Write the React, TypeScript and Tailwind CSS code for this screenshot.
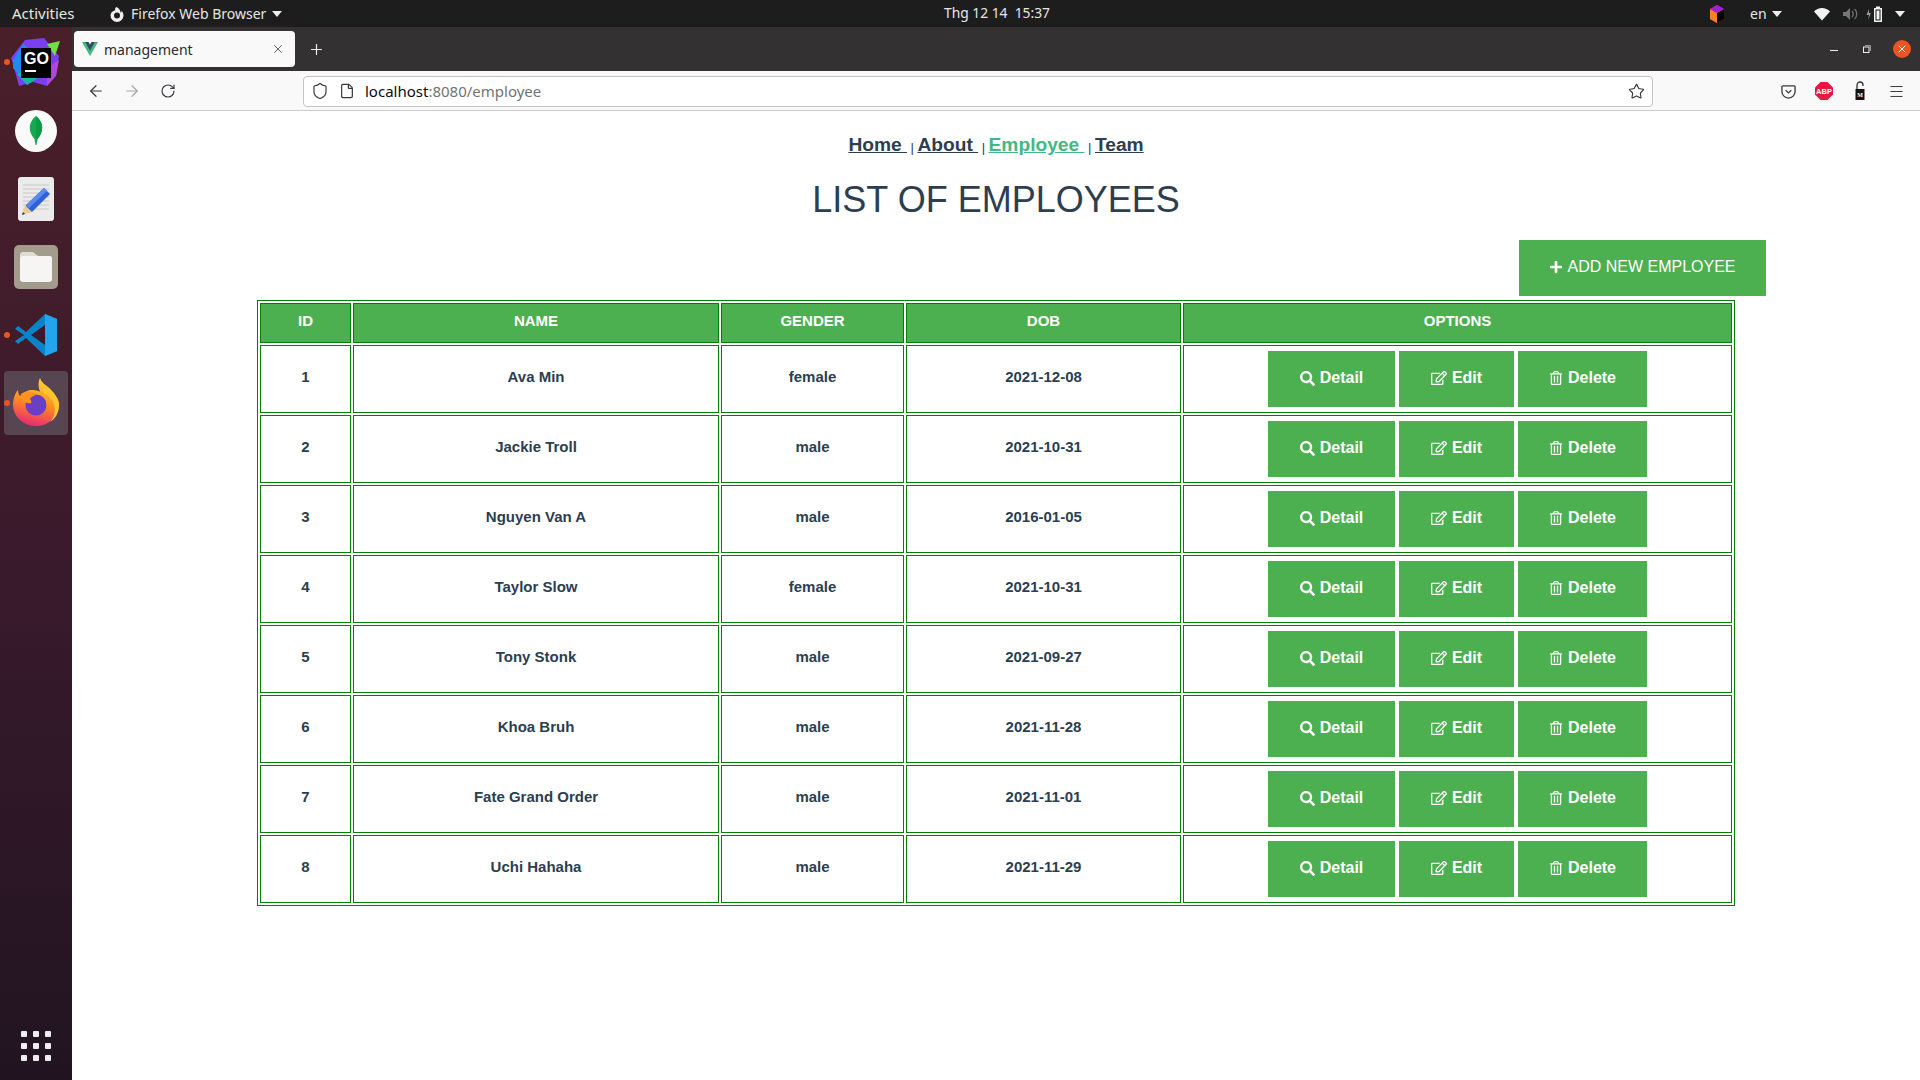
import React from "react";
import { FaSearch, FaRegEdit, FaRegTrashAlt, FaPlus } from "react-icons/fa";
import { ArrowLeft, ArrowRight, RotateCw, Star, Menu, X, Plus, File, Shield } from "lucide-react";

const rows = [
  ["1", "Ava Min", "female", "2021-12-08"],
  ["2", "Jackie Troll", "male", "2021-10-31"],
  ["3", "Nguyen Van A", "male", "2016-01-05"],
  ["4", "Taylor Slow", "female", "2021-10-31"],
  ["5", "Tony Stonk", "male", "2021-09-27"],
  ["6", "Khoa Bruh", "male", "2021-11-28"],
  ["7", "Fate Grand Order", "male", "2021-11-01"],
  ["8", "Uchi Hahaha", "male", "2021-11-29"],
];

function Caret({ className = "" }: { className?: string }) {
  return <span className={`block w-0 h-0 border-l-[5px] border-r-[5px] border-t-[6px] border-l-transparent border-r-transparent border-t-[#eeeeee] ${className}`} />;
}

function TopBar() {
  return (
    <div className="h-[27px] bg-[#1d1d1d] text-[#e6e6e6] text-[14px] flex items-center font-['Noto_Sans',sans-serif]">
      <div className="w-[944px] flex items-center pl-3">
        <span className="w-[97px] text-[15px]">Activities</span>
        <svg width="16" height="16" viewBox="0 0 16 16" className="mr-[6px]">
          <path fillRule="evenodd" d="M7.500 1C5.600 2 6 3.500 6.300 4.300 3.700 4.800 1.500 6.700 1.500 9.500a6.500 6.500 0 0 0 13 0c0-2-.9-3.700-2-4.800.2 1-.2 1.700-.8 2-.3-2.300-1.900-4.700-4.200-5.700zM8 6.500a3 3 0 1 1 0 6 3 3 0 0 1 0-6z" fill="#eeeeee" />
        </svg>
        <span className="mr-[6px]">Firefox Web Browser</span>
        <Caret />
      </div>
      <span className="w-[106px] text-center text-[13.8px] whitespace-pre">Thg 12 14  15:37</span>
      <div className="flex-1 flex items-center">
        <svg width="16" height="20" viewBox="0 0 16 20" className="ml-[659px]">
          <path d="M8 1l7 4v10l-7 4-7-4V5z" fill="#ec1e8a" />
          <path d="M1 5l7 4v10l-7-4z" fill="#f58220" />
          <path d="M8 9l7-4v10l-7 4z" fill="#000000" />
          <path d="M1 5l7-4 7 4-7 4z" fill="#a01fd0" />
        </svg>
        <span className="ml-[25px]">en</span>
        <Caret className="ml-[5px]" />
        <svg width="16" height="14" viewBox="0 0 16 14" className="ml-[32px]">
          <path d="M0 4.500C2 2.500 5 1 8 1s6 1.500 8 3.500L8 13.500z" fill="#f2f2f2" />
        </svg>
        <svg width="16" height="14" viewBox="0 0 16 14" className="ml-[12px]">
          <path d="M1 5h3l4-4v12l-4-4H1z" fill="#777777" />
          <path d="M10 4c1.500 1.500 1.500 4.500 0 6M12.500 2c3 2.500 3 7.500 0 10" stroke="#777777" strokeWidth="1.200" fill="none" />
        </svg>
        <svg width="22" height="18" viewBox="0 0 22 18" className="ml-[7px]">
          <path d="M4 4L1.500 10H4L3 15l3-7H4z" fill="#999999" />
          <path d="M11 1.500h4V3h2v14H9V3h2z" fill="#f2f2f2" />
          <rect x="10.500" y="4.500" width="5" height="11" fill="#1d1d1d" />
          <rect x="11.500" y="5.500" width="3" height="9" fill="#f2f2f2" />
        </svg>
        <Caret className="ml-[8px]" />
      </div>
    </div>
  );
}

function GoLand() {
  return (
    <svg width="50" height="50" viewBox="0 0 50 50">
      <path d="M14 2L33 0l15 18-3 19-9 11-14-4-14 4L2 26 0 20z" fill="#7b3ff2" />
      <path d="M2 22L12 6l14 12-9 29L2 30z" fill="#1f8bf0" />
      <path d="M6 36l10 11 14-9-8-10z" fill="#13b8a5" />
      <path d="M36 6l13-3-5 15z" fill="#6ee044" />
      <path d="M36 30l12-8-3 16-9 10z" fill="#b245e0" />
      <rect x="10" y="10" width="30" height="30" fill="#000000" />
      <rect x="14" y="32" width="11" height="2" fill="#ffffff" />
    </svg>
  );
}

function Dock() {
  return (
    <div className="relative w-[72px] shrink-0 flex flex-col items-center pt-[2px] bg-gradient-to-b from-[#4a1f29] via-[#3a1a2c] to-[#211420]">
      <div className="h-[68px] flex items-center justify-center relative w-full">
        <div className="relative">
          <GoLand />
          <span className="absolute left-[13px] top-[13px] text-white text-[16px] leading-none font-bold font-['Liberation_Sans',sans-serif]">GO</span>
        </div>
      </div>
      <div className="h-[68px] flex items-center justify-center">
        <svg width="42" height="42" viewBox="0 0 42 42">
          <circle cx="21" cy="21" r="21" fill="#fafafa" />
          <path d="M21 6c8 6 8 16 1.500 23l-1 6h-1l-1-6C13 22 13 12 21 6z" fill="#13aa52" />
          <path d="M21 6c8 6 8 16 1.500 23l-1.500 2z" fill="#0f9a49" />
        </svg>
      </div>
      <div className="h-[68px] flex items-center justify-center">
        <svg width="36" height="44" viewBox="0 0 36 44">
          <rect width="36" height="44" rx="3" fill="#ebebeb" />
          <path d="M5 8h26M5 12h26M5 16h26M5 20h26M5 24h26M5 28h26M5 32h26" stroke="#c8c8c8" strokeWidth="1" />
          <path d="M26 11l6 6-18 18-7-1 1-6z" fill="#2f62d6" />
          <path d="M26 11l3 3-18 17-3-3z" fill="#5a8af0" />
          <path d="M7 28l7 7-10 3z" fill="#e8c9a0" />
          <path d="M5 35l2 2-3 1z" fill="#333333" />
        </svg>
      </div>
      <div className="h-[68px] flex items-center justify-center">
        <svg width="44" height="44" viewBox="0 0 44 44">
          <rect width="44" height="44" rx="5" fill="#a39c8c" />
          <path d="M6 15v-5a3 3 0 0 1 3-3h10l5 4h12a2 2 0 0 1 2 2v2z" fill="#dfdcd3" />
          <rect x="6" y="11" width="32" height="26" rx="3" fill="#f6f5f3" />
        </svg>
      </div>
      <div className="h-[68px] flex items-center justify-center">
        <svg width="42" height="42" viewBox="0 0 42 42">
          <path d="M30 0L42 5v32l-12 5L11 24l-8 6-3-3 9-6-9-6 3-3 8 6z" fill="#0a84c8" />
          <path d="M30 0l12 5v32l-12 5z" fill="#23a5ee" />
          <path d="M30 11v20L16 21z" fill="#3a1a2c" />
        </svg>
      </div>
      <div className="h-[68px] flex items-center justify-center">
        <div className="w-[64px] h-[64px] rounded-[4px] bg-[#574552] flex items-center justify-center pb-[3px]">
          <svg width="46" height="48" viewBox="0 0 46 48">
            <defs>
              <linearGradient id="ff" x1="0.700" y1="0" x2="0.450" y2="1">
                <stop offset="0" stopColor="#ffd93a" />
                <stop offset="0.550" stopColor="#ff8a1f" />
                <stop offset="1" stopColor="#ea2a72" />
              </linearGradient>
            </defs>
            <path d="M27 0c1 5 6 7 10 11 6 6 9 11 9 16a23 21 0 1 1-46 0c0-6 2-12 5-15 0 3 1 5 2 6 2-3 6-5 10-6 2 0 8 0 10 2-2-5-2-10 0-14z" fill="url(#ff)" />
            <path d="M27 0c1 5 6 7 10 11 6 6 9 11 9 16 0 8-4 14-9 17 4-4 6-10 4-17-1-5-5-9-9-11-3-5-6-9-5-16z" fill="#ffc52e" />
            <circle cx="23" cy="27" r="10.500" fill="#6a3fc4" />
            <path d="M8 16c5-3 11-3 15 1-3 1-5 2-6 4 1 2 2 3 1 4-5 1-9-2-10-9z" fill="#ff9322" />
          </svg>
        </div>
      </div>
      <span className="absolute left-[4px] top-[32px] w-[6px] h-[6px] rounded-full bg-[#e95420]" />
      <span className="absolute left-[4px] top-[305px] w-[6px] h-[6px] rounded-full bg-[#e95420]" />
      <span className="absolute left-[4px] top-[373px] w-[6px] h-[6px] rounded-full bg-[#e95420]" />
      <div className="mt-auto mb-[19px] grid grid-cols-3 gap-[6px]">
        {Array.from({ length: 9 }).map((_, i) => (
          <span key={i} className="w-[6px] h-[6px] rounded-[1px] bg-[#eeeeee]" />
        ))}
      </div>
    </div>
  );
}

function Chrome() {
  return (
    <>
      <div className="h-[44px] bg-[#333132] flex items-start pt-[4px] pl-[2px] font-['Noto_Sans',sans-serif]">
        <div className="w-[221px] h-[36px] bg-[#f9f9fa] rounded-[4px] flex items-center pl-[8px] pr-[10px] text-[14px] text-[#2a2a2e]">
          <svg width="16" height="14" viewBox="0 0 16 14">
            <path d="M0 0h6.400L8 2.800 9.600 0H16L8 14z" fill="#41b883" />
            <path d="M3.200 0h3.200L8 2.800 9.600 0h3.200L8 8.400z" fill="#35495e" />
          </svg>
          <span className="ml-[6px]">management</span>
          <X size={14} strokeWidth={1.4} className="ml-auto text-[#444444]" />
        </div>
        <Plus size={17} strokeWidth={1.7} className="ml-[13px] mt-[10px] text-[#eeeeee]" />
        <div className="ml-auto mt-[4px] flex items-center h-[28px] text-[#eeeeee] pr-[9px]">
          <span className="w-[8px] h-[1px] bg-[#eeeeee] mt-[3px]" />
          <svg width="8" height="8" viewBox="0 0 8 8" className="ml-[25px]">
            <rect x="0.500" y="2" width="5.500" height="5.500" fill="none" stroke="#eeeeee" />
            <path d="M2 .5h5.500V6" fill="none" stroke="#999999" />
          </svg>
          <span className="ml-[22px] w-[18px] h-[18px] rounded-full bg-[#e95420] flex items-center justify-center">
            <X size={12} strokeWidth={2} className="text-white" />
          </span>
        </div>
      </div>
      <div className="h-[40px] bg-[#f9f9fa] border-b border-[#cccccc] flex items-center box-border text-[#38383d] font-['Noto_Sans',sans-serif] pt-[1px]">
        <ArrowLeft size={18} strokeWidth={1.6} className="ml-[15px]" />
        <ArrowRight size={18} strokeWidth={1.6} className="ml-[18px] text-[#a6a6a8]" />
        <RotateCw size={16} strokeWidth={1.7} className="ml-[19px]" />
        <div className="ml-[127px] w-[1350px] h-[31px] bg-white border border-[#c4c4c4] rounded-[4px] flex items-center pl-[7px] pr-[7px] text-[15px]">
          <Shield size={18} strokeWidth={1.6} />
          <File size={16} strokeWidth={1.8} className="ml-[10px]" />
          <span className="ml-[10px] text-[#0c0c0d]">localhost<span className="text-[#737373]">:8080/employee</span></span>
          <Star size={17} strokeWidth={1.6} className="ml-auto" />
        </div>
        <svg width="15" height="15" viewBox="0 0 16 16" className="ml-[128px]">
          <path d="M2 2h12a1 1 0 0 1 1 1v5a7 7 0 0 1-14 0V3a1 1 0 0 1 1-1z" fill="none" stroke="#38383d" strokeWidth="1.400" />
          <path d="M5 6.500l3 3 3-3" fill="none" stroke="#38383d" strokeWidth="1.400" />
        </svg>
        <svg width="18" height="18" viewBox="0 0 18 18" className="ml-[19px]">
          <path d="M5.500 0h7L18 5.500v7L12.500 18h-7L0 12.500v-7z" fill="#e8173f" />
          <text x="9" y="12" textAnchor="middle" fontSize="7.500" fontWeight="700" fill="#ffffff" fontFamily="Liberation Sans, sans-serif">ABP</text>
        </svg>
        <svg width="12" height="20" viewBox="0 0 12 20" className="ml-[21px]">
          <path d="M3 8V4a3 3 0 0 1 6 0v1" fill="none" stroke="#333333" strokeWidth="1.300" />
          <rect x="1.500" y="8" width="9" height="11" fill="#111111" />
          <text x="6" y="16" textAnchor="middle" fontSize="6" fontWeight="700" fill="#ffffff" fontFamily="Liberation Serif, serif">M</text>
        </svg>
        <Menu size={17} strokeWidth={1.4} className="ml-[22px]" />
      </div>
    </>
  );
}

function Btn({ icon, label, className }: { icon: React.ReactNode; label: string; className: string }) {
  return (
    <button className={`h-[56px] bg-[#4caf50] text-white font-bold text-[16px] inline-flex items-center justify-center gap-[5px] pb-[2px] ${className}`}>
      {icon}
      {label}
    </button>
  );
}

const th = "border border-[#008000] bg-[#4caf50] text-white font-bold text-[15px] h-[40px] p-0 pb-[3px] text-center align-middle";
const td = "border border-[#008000] font-bold text-[15px] h-[68px] p-0 pb-[4px] text-center align-middle";
const tdOpt = "border border-[#008000] h-[68px] p-0 text-center align-middle";

function Sep() {
  return <span className="text-[13px] font-normal mx-[3.5px] mt-[5px]">|</span>;
}

export default function App() {
  return (
    <div className="w-[1920px] h-[1080px] overflow-hidden flex flex-col bg-white font-['Liberation_Sans',Arial,sans-serif] text-[#2c3e50]">
      <TopBar />
      <div className="flex flex-1 min-h-0">
        <Dock />
        <div className="flex-1 flex flex-col min-w-0">
          <Chrome />
          <main className="flex-1">
            <nav className="h-[32px] mt-[18px] flex justify-center items-center text-[19.2px] font-bold whitespace-pre leading-none">
              <a className="underline">Home </a>
              <Sep />
              <a className="underline">About </a>
              <Sep />
              <a className="underline text-[#42b983]">Employee </a>
              <Sep />
              <a className="underline">Team</a>
            </nav>
            <h1 className="text-[36px] leading-[42px] text-center mt-[18px] font-normal">LIST OF EMPLOYEES</h1>
            <div className="flex justify-end pr-[154px] mt-[19px] mb-[4px]">
              <button className="w-[247px] h-[56px] bg-[#4caf50] text-white text-[16px] inline-flex items-center justify-center gap-[4px] pb-[2px]">
                <FaPlus size={14} />
                ADD NEW EMPLOYEE
              </button>
            </div>
            <table className="w-[1478px] mx-auto border border-[#008000] border-separate border-spacing-[2px] table-fixed">
              <colgroup>
                <col className="w-[91px]" />
                <col className="w-[366px]" />
                <col className="w-[183px]" />
                <col className="w-[275px]" />
                <col />
              </colgroup>
              <thead>
                <tr>
                  <th className={th}>ID</th>
                  <th className={th}>NAME</th>
                  <th className={th}>GENDER</th>
                  <th className={th}>DOB</th>
                  <th className={th}>OPTIONS</th>
                </tr>
              </thead>
              <tbody>
                {rows.map((r) => (
                  <tr key={r[0]}>
                    {r.map((c, i) => (
                      <td key={i} className={td}>{c}</td>
                    ))}
                    <td className={tdOpt}>
                      <div className="flex justify-center gap-[4px]">
                        <Btn icon={<FaSearch size={15} />} label="Detail" className="w-[127px]" />
                        <Btn icon={<FaRegEdit size={16} />} label="Edit" className="w-[115px]" />
                        <Btn icon={<FaRegTrashAlt size={14} />} label="Delete" className="w-[129px]" />
                      </div>
                    </td>
                  </tr>
                ))}
              </tbody>
            </table>
          </main>
        </div>
      </div>
    </div>
  );
}
